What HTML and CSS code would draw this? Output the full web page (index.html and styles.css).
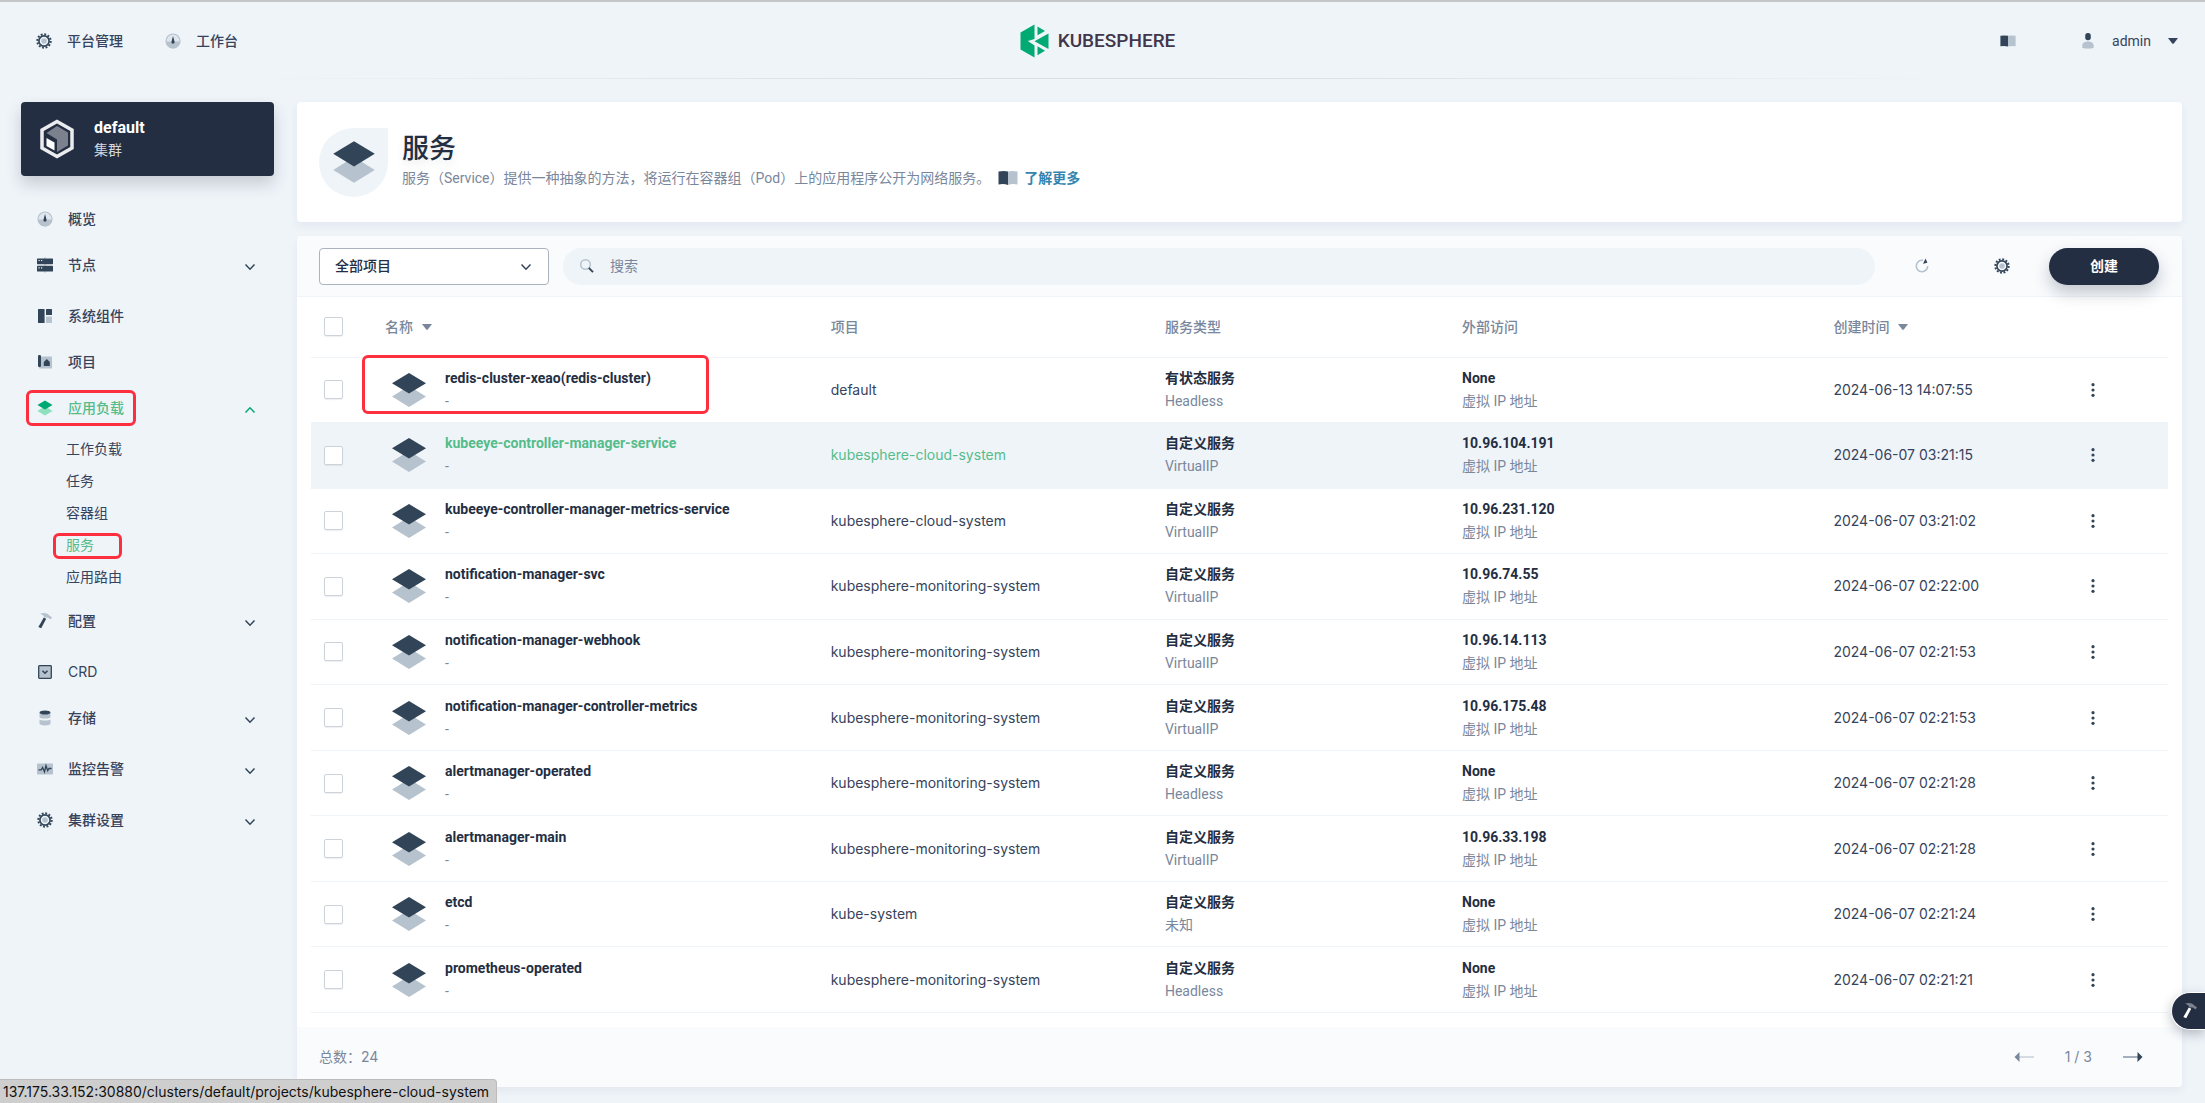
FILE: index.html
```html
<!DOCTYPE html>
<html lang="zh-CN">
<head>
<meta charset="utf-8">
<title>服务 - KubeSphere</title>
<link rel="stylesheet" href="styles.css">
</head>
<body>
<svg class="sprite" aria-hidden="true">
  <symbol id="i-gear" viewBox="0 0 16 16"><circle cx="8" cy="8" r="6.7" fill="none" stroke="#324558" stroke-width="2" stroke-dasharray="1.9 1.608"/><circle cx="8" cy="8" r="5.1" fill="none" stroke="#324558" stroke-width="1.7"/><circle cx="8" cy="8" r="2.8" fill="#b6c2cd"/></symbol>
  <symbol id="i-dash" viewBox="0 0 16 16"><circle cx="8" cy="8" r="7" fill="#dfe6ed" stroke="#b6c2cd" stroke-width="1.2"/><path d="M1 8.600h14a7 7 0 0 1-14 0z" fill="#b6c2cd"/><path d="M8 3l1.500 5.500a1.600 1.600 0 1 1-3 0z" fill="#324558"/></symbol>
  <symbol id="i-nodes" viewBox="0 0 16 16"><path d="M8 0v16" stroke="#b6c2cd"/><rect x="0" y="1.500" width="16" height="5.700" rx=".6" fill="#324558"/><rect x="0" y="8.800" width="16" height="5.700" rx=".6" fill="#324558"/><path d="M1.500 3.500h1.200M4 3.500h1.200M1.500 10.800h1.200M4 10.800h1.200" stroke="#eff4f9" stroke-width="1.200"/></symbol>
  <symbol id="i-comp" viewBox="0 0 16 16"><rect x="1" y="1" width="6.600" height="14" rx=".6" fill="#324558"/><rect x="9" y="1" width="6" height="6" rx=".6" fill="#324558"/><rect x="9" y="8.500" width="6" height="6.500" rx=".6" fill="#b6c2cd"/></symbol>
  <symbol id="i-proj" viewBox="0 0 16 16"><rect x="2" y="2.500" width="13" height="12" rx=".8" fill="#b6c2cd"/><rect x="1" y="1" width="3" height="12" rx="1.200" fill="#324558"/><path d="M6.800 12V8L9.800 5l3 3v4z" fill="#324558"/></symbol>
  <symbol id="i-layers" viewBox="0 0 36 36"><path d="M1 24.500 18 14l17 10.500L18 35z" class="lo"/><path d="M1 11.300 18 1l17 10.300L18 21.600z" class="hi"/></symbol>
  <symbol id="i-hammer" viewBox="0 0 16 16"><path d="M3 .8C7-.6 10 .2 12.300 2.400l2.700 1.800-1.500 2.300-2.200-1.700-4-.6C6.500 2.200 5 1.400 3 .8z" class="lo"/><path d="M6.800 4.600l2.400 1.200-5 9.400-2.800-1.300z" class="hi"/></symbol>
  <symbol id="i-crd" viewBox="0 0 16 16"><rect x="1.700" y="1.700" width="12.600" height="12.600" rx=".8" fill="#b6c2cd" stroke="#324558" stroke-width="1.300"/><path d="M5.500 6.700 8 9.200l2.500-2.500" fill="none" stroke="#324558" stroke-width="1.500"/></symbol>
  <symbol id="i-store" viewBox="0 0 16 16"><path d="M2.500 3v4c0 2 11 2 11 0V3zM2.500 9.500v4c0 2.500 11 2.500 11 0v-4c-1 1.300-10 1.300-11 0z" fill="#b6c2cd"/><ellipse cx="8" cy="2.500" rx="5.500" ry="2" fill="#324558"/></symbol>
  <symbol id="i-mon" viewBox="0 0 16 16"><rect x="0" y="2.500" width="16" height="11" rx=".8" fill="#b6c2cd"/><path d="M1.500 8.800h2.700L5.600 6.500 7.500 11 9 4.700l1.700 5L12 7.500h2.500" fill="none" stroke="#324558" stroke-width="1.300"/></symbol>
  <symbol id="i-down" viewBox="0 0 12 12"><path d="M1.500 3.500 6 8.200l4.500-4.700" fill="none" stroke="currentColor" stroke-width="1.500"/></symbol>
  <symbol id="i-up" viewBox="0 0 12 12"><path d="M1.500 8.500 6 3.800l4.500 4.700" fill="none" stroke="currentColor" stroke-width="1.500"/></symbol>
  <symbol id="i-caret" viewBox="0 0 12 12"><path d="M1 3h10L7 8.300q-1 1-2 0z" fill="currentColor"/></symbol>
  <symbol id="i-book" viewBox="0 0 20 16"><path d="M.5 1.500Q6 .5 10 1.500v13.500Q6 13.500.5 14.500z" fill="#324558"/><path d="M10 1.500q4-1 9.500 0v13Q14 13.500 10 15z" fill="#b6c2cd"/></symbol>
  <symbol id="i-user" viewBox="0 0 16 16"><rect x="5.200" y="0" width="5.600" height="7.300" rx="2.700" fill="#324558"/><path d="M2.300 15v-2.500c0-5.200 11.400-5.200 11.400 0V15q-5.700 1-11.400 0z" fill="#b6c2cd"/></symbol>
  <symbol id="i-search" viewBox="0 0 16 16"><circle cx="6.500" cy="6.500" r="4.800" fill="none" stroke="#b6c2cd" stroke-width="1.500"/><path d="M9.800 9.800l4.200 4.400" stroke="#324558" stroke-width="1.900"/></symbol>
  <symbol id="i-refresh" viewBox="0 0 16 16"><path d="M9 2.400A5.700 5.700 0 1 0 13.700 8" fill="none" stroke="#b6c2cd" stroke-width="1.600"/><path d="M9 5.800 11.600.4l.6 1.600 1.200 2.800z" fill="#324558"/></symbol>
  <symbol id="i-more" viewBox="0 0 16 16"><circle cx="8" cy="2.700" r="1.600"/><circle cx="8" cy="8" r="1.600"/><circle cx="8" cy="13.300" r="1.600"/></symbol>
  <symbol id="i-prev" viewBox="0 0 20 12"><path d="M5 6h15" stroke="#ccd3db" stroke-width="1.600"/><path d="M5.500 1v10L.5 6z" fill="#79879c"/></symbol>
  <symbol id="i-next" viewBox="0 0 20 12"><path d="M0 6h15" stroke="#8f9cab" stroke-width="1.600"/><path d="M14.500 1v10l5-5z" fill="#324558"/></symbol>
</svg>

<header class="topbar">
  <nav class="topnav">
    <a href="#"><svg class="ic"><use href="#i-gear"/></svg>平台管理</a>
    <a href="#"><svg class="ic"><use href="#i-dash"/></svg>工作台</a>
  </nav>
  <a class="logo" href="#">
    <svg viewBox="0 0 30 34"><path d="M14.500.5V15L7.800 17l6.700 4.500v12L.5 25.500v-17z" fill="#00aa72"/><path d="M17.500 2.500 25 7l-7.500 4.200zM28.500 9.500v15.500L14.500 17.200zM17.500 22.300 25 26.700l-7.500 4.500z" fill="#00aa72"/></svg>
    <span>KUBESPHERE</span>
  </a>
  <div class="account">
    <a href="#" aria-label="文档"><svg class="ic"><use href="#i-book"/></svg></a>
    <button class="user" type="button"><svg class="ic"><use href="#i-user"/></svg><span>admin</span><svg class="ar"><use href="#i-caret"/></svg></button>
  </div>
</header>

<div class="layout">
  <aside class="sidebar">
    <button class="cluster" type="button">
      <svg viewBox="0 0 40 40"><path d="M20 2.500 35 11v18l-15 8.500L5 29V11z" fill="none" stroke="#eaecee" stroke-width="3.500"/><path d="M20 7 31 13.500v13L20 33V20.500L9.500 14z" fill="#7c818e"/><path d="M9.500 19 17.500 23.500v8L9.500 27z" fill="#fff"/></svg>
      <span><strong>default</strong><small>集群</small></span>
    </button>
    <nav>
      <ul class="menu">
        <li><a href="#"><svg class="ic"><use href="#i-dash"/></svg>概览</a></li>
        <li class="fold"><a href="#"><svg class="ic"><use href="#i-nodes"/></svg>节点<svg class="ar"><use href="#i-down"/></svg></a></li>
        <li><a href="#"><svg class="ic"><use href="#i-comp"/></svg>系统组件</a></li>
        <li><a href="#"><svg class="ic"><use href="#i-proj"/></svg>项目</a></li>
        <li class="fold"><a class="on marked" href="#"><svg class="ic"><use href="#i-layers"/></svg>应用负载<svg class="ar"><use href="#i-up"/></svg></a>
          <ul class="sub">
            <li><a href="#">工作负载</a></li>
            <li><a href="#">任务</a></li>
            <li><a href="#">容器组</a></li>
            <li><a class="on marked" href="#">服务</a></li>
            <li><a href="#">应用路由</a></li>
          </ul>
        </li>
        <li class="fold"><a href="#"><svg class="ic"><use href="#i-hammer"/></svg>配置<svg class="ar"><use href="#i-down"/></svg></a></li>
        <li><a class="latin" href="#"><svg class="ic"><use href="#i-crd"/></svg>CRD</a></li>
        <li class="fold"><a href="#"><svg class="ic"><use href="#i-store"/></svg>存储<svg class="ar"><use href="#i-down"/></svg></a></li>
        <li class="fold"><a href="#"><svg class="ic"><use href="#i-mon"/></svg>监控告警<svg class="ar"><use href="#i-down"/></svg></a></li>
        <li class="fold"><a href="#"><svg class="ic"><use href="#i-gear"/></svg>集群设置<svg class="ar"><use href="#i-down"/></svg></a></li>
      </ul>
    </nav>
  </aside>

  <main class="content">
    <section class="banner">
      <div class="drop"><svg><use href="#i-layers"/></svg></div>
      <div class="intro">
        <h1>服务</h1>
        <p>服务（Service）提供一种抽象的方法，将运行在容器组（Pod）上的应用程序公开为网络服务。<a href="#"><svg><use href="#i-book"/></svg>了解更多</a></p>
      </div>
    </section>

    <section class="panel">
      <div class="toolbar">
        <div class="select">
          <select aria-label="项目"><option>全部项目</option></select>
          <svg class="ar"><use href="#i-down"/></svg>
        </div>
        <label class="search"><svg class="ic"><use href="#i-search"/></svg><input type="text" placeholder="搜索" aria-label="搜索"></label>
        <button class="tool" type="button" aria-label="刷新"><svg class="ic"><use href="#i-refresh"/></svg></button>
        <button class="tool" type="button" aria-label="设置"><svg class="ic"><use href="#i-gear"/></svg></button>
        <button class="create" type="button">创建</button>
      </div>

      <div class="table-wrap">
        <table>
          <colgroup><col class="c-check"><col class="c-name"><col class="c-proj"><col class="c-type"><col class="c-ext"><col class="c-time"><col></colgroup>
          <thead>
            <tr><th><input type="checkbox" aria-label="全选"></th><th><span class="sort">名称<svg class="ar"><use href="#i-caret"/></svg></span></th><th>项目</th><th>服务类型</th><th>外部访问</th><th><span class="sort">创建时间<svg class="ar"><use href="#i-caret"/></svg></span></th><th></th></tr>
          </thead>
          <tbody>
            <tr><td><input type="checkbox" aria-label="选择"></td><td class="name marked"><div><svg><use href="#i-layers"/></svg><p><a href="#">redis-cluster-xeao(redis-cluster)</a><small>-</small></p></div></td><td><a href="#">default</a></td><td><b>有状态服务</b><small>Headless</small></td><td><b>None</b><small>虚拟 IP 地址</small></td><td>2024-06-13 14:07:55</td><td><button type="button" aria-label="更多"><svg><use href="#i-more"/></svg></button></td></tr>
            <tr class="hover"><td><input type="checkbox" aria-label="选择"></td><td class="name"><div><svg><use href="#i-layers"/></svg><p><a href="#">kubeeye-controller-manager-service</a><small>-</small></p></div></td><td><a href="#">kubesphere-cloud-system</a></td><td><b>自定义服务</b><small>VirtualIP</small></td><td><b>10.96.104.191</b><small>虚拟 IP 地址</small></td><td>2024-06-07 03:21:15</td><td><button type="button" aria-label="更多"><svg><use href="#i-more"/></svg></button></td></tr>
            <tr><td><input type="checkbox" aria-label="选择"></td><td class="name"><div><svg><use href="#i-layers"/></svg><p><a href="#">kubeeye-controller-manager-metrics-service</a><small>-</small></p></div></td><td><a href="#">kubesphere-cloud-system</a></td><td><b>自定义服务</b><small>VirtualIP</small></td><td><b>10.96.231.120</b><small>虚拟 IP 地址</small></td><td>2024-06-07 03:21:02</td><td><button type="button" aria-label="更多"><svg><use href="#i-more"/></svg></button></td></tr>
            <tr><td><input type="checkbox" aria-label="选择"></td><td class="name"><div><svg><use href="#i-layers"/></svg><p><a href="#">notification-manager-svc</a><small>-</small></p></div></td><td><a href="#">kubesphere-monitoring-system</a></td><td><b>自定义服务</b><small>VirtualIP</small></td><td><b>10.96.74.55</b><small>虚拟 IP 地址</small></td><td>2024-06-07 02:22:00</td><td><button type="button" aria-label="更多"><svg><use href="#i-more"/></svg></button></td></tr>
            <tr><td><input type="checkbox" aria-label="选择"></td><td class="name"><div><svg><use href="#i-layers"/></svg><p><a href="#">notification-manager-webhook</a><small>-</small></p></div></td><td><a href="#">kubesphere-monitoring-system</a></td><td><b>自定义服务</b><small>VirtualIP</small></td><td><b>10.96.14.113</b><small>虚拟 IP 地址</small></td><td>2024-06-07 02:21:53</td><td><button type="button" aria-label="更多"><svg><use href="#i-more"/></svg></button></td></tr>
            <tr><td><input type="checkbox" aria-label="选择"></td><td class="name"><div><svg><use href="#i-layers"/></svg><p><a href="#">notification-manager-controller-metrics</a><small>-</small></p></div></td><td><a href="#">kubesphere-monitoring-system</a></td><td><b>自定义服务</b><small>VirtualIP</small></td><td><b>10.96.175.48</b><small>虚拟 IP 地址</small></td><td>2024-06-07 02:21:53</td><td><button type="button" aria-label="更多"><svg><use href="#i-more"/></svg></button></td></tr>
            <tr><td><input type="checkbox" aria-label="选择"></td><td class="name"><div><svg><use href="#i-layers"/></svg><p><a href="#">alertmanager-operated</a><small>-</small></p></div></td><td><a href="#">kubesphere-monitoring-system</a></td><td><b>自定义服务</b><small>Headless</small></td><td><b>None</b><small>虚拟 IP 地址</small></td><td>2024-06-07 02:21:28</td><td><button type="button" aria-label="更多"><svg><use href="#i-more"/></svg></button></td></tr>
            <tr><td><input type="checkbox" aria-label="选择"></td><td class="name"><div><svg><use href="#i-layers"/></svg><p><a href="#">alertmanager-main</a><small>-</small></p></div></td><td><a href="#">kubesphere-monitoring-system</a></td><td><b>自定义服务</b><small>VirtualIP</small></td><td><b>10.96.33.198</b><small>虚拟 IP 地址</small></td><td>2024-06-07 02:21:28</td><td><button type="button" aria-label="更多"><svg><use href="#i-more"/></svg></button></td></tr>
            <tr><td><input type="checkbox" aria-label="选择"></td><td class="name"><div><svg><use href="#i-layers"/></svg><p><a href="#">etcd</a><small>-</small></p></div></td><td><a href="#">kube-system</a></td><td><b>自定义服务</b><small>未知</small></td><td><b>None</b><small>虚拟 IP 地址</small></td><td>2024-06-07 02:21:24</td><td><button type="button" aria-label="更多"><svg><use href="#i-more"/></svg></button></td></tr>
            <tr><td><input type="checkbox" aria-label="选择"></td><td class="name"><div><svg><use href="#i-layers"/></svg><p><a href="#">prometheus-operated</a><small>-</small></p></div></td><td><a href="#">kubesphere-monitoring-system</a></td><td><b>自定义服务</b><small>Headless</small></td><td><b>None</b><small>虚拟 IP 地址</small></td><td>2024-06-07 02:21:21</td><td><button type="button" aria-label="更多"><svg><use href="#i-more"/></svg></button></td></tr>
          </tbody>
        </table>
      </div>

      <footer class="pager">
        <span>总数：24</span>
        <div><button type="button" aria-label="上一页"><svg><use href="#i-prev"/></svg></button><span>1 / 3</span><button type="button" aria-label="下一页"><svg><use href="#i-next"/></svg></button></div>
      </footer>
    </section>
  </main>
</div>

<button class="toolbox" type="button" aria-label="工具箱"><svg class="ic"><use href="#i-hammer"/></svg></button>
<div class="status">137.175.33.152:30880/clusters/default/projects/kubesphere-cloud-system</div>
</body>
</html>
```

FILE: styles.css
```css
:root {
  --ink: #242e42;
  --nav: #36435c;
  --muted: #79879c;
  --line: #eff4f9;
  --green: #55bc8a;
  --mark: #fd2f3e;
  --text: Roboto, "Noto Sans CJK SC", sans-serif;
  --wide: Inter, "Noto Sans CJK SC", sans-serif;
}
*, *::after { box-sizing: border-box; }
body {
  margin: 0;
  background: #eff4f9;
  border-top: 2px solid #c3c5c7;
  color: var(--nav);
  font: 14px/20px var(--text);
}
a { color: inherit; text-decoration: none; }
button, input, select { font: inherit; color: inherit; }
button { padding: 0; border: 0; background: none; }
ul { list-style: none; margin: 0; padding: 0; }
svg { flex: none; }
.sprite { position: absolute; width: 0; height: 0; }
.ic { width: 16px; height: 16px; }
.ar { width: 12px; height: 12px; }
.lo { fill: var(--lo, #b6c2cd); }
.hi { fill: var(--hi, #324558); }

.topbar {
  display: grid;
  grid-template-columns: 1fr auto 1fr;
  align-items: center;
  height: 77px;
  padding: 2px 26px 0 36px;
  border-bottom: 1px solid;
  border-image: linear-gradient(90deg, #eff4f9 10%, #d8dee5 45%, #d8dee5 55%, #eff4f9 90%) 1;
}
.topnav { display: flex; gap: 42px; font-weight: 500; }
.topnav a { display: flex; align-items: center; gap: 15px; }
.logo { display: flex; align-items: center; gap: 8px; margin-right: 20px; color: #42364b; font-size: 19px; font-weight: 500; line-height: 34px; }
.logo svg { width: 30px; height: 34px; }
.account { display: flex; justify-content: flex-end; align-items: center; gap: 64px; }
.account a, .account svg { display: block; }
.user { display: flex; align-items: center; gap: 16px; }

.layout { display: flex; gap: 23px; padding: 23px 23px 16px 21px; }
.sidebar { flex: 0 0 253px; }
.cluster {
  display: flex;
  align-items: center;
  gap: 17px;
  width: 100%;
  height: 74px;
  padding: 0 16px;
  border-radius: 4px;
  background: var(--ink);
  color: #fff;
  text-align: left;
  box-shadow: 0 8px 16px rgba(36, 46, 66, .2);
}
.cluster svg { width: 40px; height: 40px; }
.cluster strong, .cluster small { display: block; line-height: 23px; }
.cluster strong { font-size: 16px; }
.cluster small { font-size: 14px; color: #d5d8dd; }
.menu { padding-top: 20px; font-weight: 500; }
.menu a { position: relative; display: flex; align-items: center; gap: 15px; height: 46px; padding: 0 18px 0 16px; }
.menu .ar { margin: 4px 0 0 auto; color: #324558; }
.menu .latin { font-family: var(--wide); font-weight: 400; }
.fold { padding-bottom: 5px; }
.menu .on { color: var(--green); --hi: #00a971; --lo: #8fe0bf; }
.menu .on .ar { color: #00a971; }
.menu .sub { padding-top: 2px; font-weight: 400; }
.menu .sub a { height: 32px; padding: 0 0 0 45px; }
.marked { position: relative; }
.marked::after { content: ""; position: absolute; border: 3px solid var(--mark); border-radius: 6px; pointer-events: none; }
.menu .marked::after { left: 5px; top: 5px; width: 110px; height: 36px; }
.menu .sub .marked::after { left: 32px; top: 4px; width: 69px; height: 26px; }

.content { flex: 1; min-width: 0; display: grid; gap: 14px; }
.banner, .panel { border-radius: 4px; background: #fff; box-shadow: 0 4px 8px rgba(36, 46, 66, .06); }
.banner { display: flex; align-items: center; gap: 14px; min-height: 120px; padding: 0 22px; }
.drop { display: grid; place-items: center; width: 69px; height: 69px; border-radius: 50% 0 50% 50%; background: #eff4f9; }
.drop svg { width: 44px; height: 44px; }
.intro { padding-bottom: 6px; }
h1 { margin: 0; color: var(--ink); font-size: 27px; line-height: 38px; font-weight: 500; text-shadow: 0 4px 8px rgba(36, 46, 66, .1); }
.banner p { display: flex; align-items: center; margin: 0; color: var(--muted); }
.banner a { display: flex; align-items: center; gap: 6px; margin-left: 8px; color: #3385b0; font-weight: 700; }
.banner a svg { width: 20px; height: 16px; }

.toolbar { display: flex; align-items: center; gap: 14px; height: 61px; padding: 0 23px 0 22px; border-bottom: 1px solid var(--line); background: #f9fbfd; border-radius: 4px 4px 0 0; }
.select { position: relative; flex: 0 0 230px; }
.select select { width: 100%; height: 37px; padding: 0 15px; border: 1px solid #abb4be; border-radius: 4px; background: #fff; color: var(--ink); font-weight: 500; appearance: none; }
.select .ar { position: absolute; right: 17px; top: 13px; }
.search { flex: 1; display: flex; align-items: center; gap: 15px; height: 37px; padding: 0 16px; border-radius: 19px; background: #eff4f9; }
.search input { flex: 1; padding: 0; border: 0; outline: 0; background: none; }
.search input::placeholder { color: var(--muted); opacity: 1; }
.tool { display: grid; place-items: center; width: 66px; height: 37px; }
.create { width: 110px; height: 37px; border-radius: 19px; background: var(--ink); color: #fff; font-weight: 700; box-shadow: 0 8px 16px rgba(36, 46, 66, .25); }

.table-wrap { padding: 0 14px 14px; }
table { width: 100%; height: 716px; border-collapse: collapse; table-layout: fixed; }
.c-check { width: 61px; }
.c-name { width: 24%; }
.c-proj { width: 18%; }
.c-type { width: 16%; }
.c-ext { width: 20%; }
.c-time { width: 14%; }
th, td { padding: 0 13px; border-bottom: 1px solid var(--line); text-align: left; vertical-align: middle; }
th { height: 60px; color: var(--muted); font-weight: 500; }
.sort { display: flex; align-items: center; gap: 8px; }
td { font-family: var(--wide); }
td small, td b { display: block; font: 14px/23px var(--text); }
td small { color: var(--muted); }
td b, .name a { color: var(--ink); font: 700 14px/23px var(--text); }
.name div { display: flex; align-items: center; gap: 18px; padding-left: 6px; }
.name svg { width: 36px; height: 36px; }
.name p { margin: 0; }
.marked.name::after { left: -10px; right: 109px; top: -3px; height: 59px; }
.hover { background: #eff4f9; }
.hover a { color: var(--green); }
td button, td button svg { display: block; width: 16px; height: 16px; fill: #324558; }
td button { margin-left: -8px; }
input[type="checkbox"] { display: block; width: 19px; height: 19px; margin: 0; border: 1px solid #ccd3db; border-radius: 2px; background: #fff; appearance: none; box-shadow: 0 1px 1px rgba(36, 46, 66, .08); }

.pager { display: flex; justify-content: space-between; align-items: center; height: 60px; padding: 0 39px 0 22px; border-radius: 0 0 4px 4px; background: #f9fbfd; color: var(--muted); font-family: var(--wide); }
.pager div { display: flex; align-items: center; gap: 31px; }
.pager svg { display: block; width: 20px; height: 12px; }

.toolbox { position: fixed; right: 0; bottom: 73px; width: 34px; height: 38px; padding-left: 10px; border: 1px solid #fff; border-right: 0; border-radius: 19px 0 0 19px; background: var(--ink); text-align: left; box-shadow: 0 4px 12px rgba(36, 46, 66, .3); --hi: #fff; --lo: #7c818e; }
.toolbox svg { display: block; }
.status { position: fixed; left: 0; bottom: 0; height: 24px; padding: 0 7px 0 3px; border: 1px solid #bcbcbc; border-width: 1px 1px 0 0; border-radius: 0 4px 0 0; background: #cecece; color: #111; font: 14px/23px var(--wide); }
```
